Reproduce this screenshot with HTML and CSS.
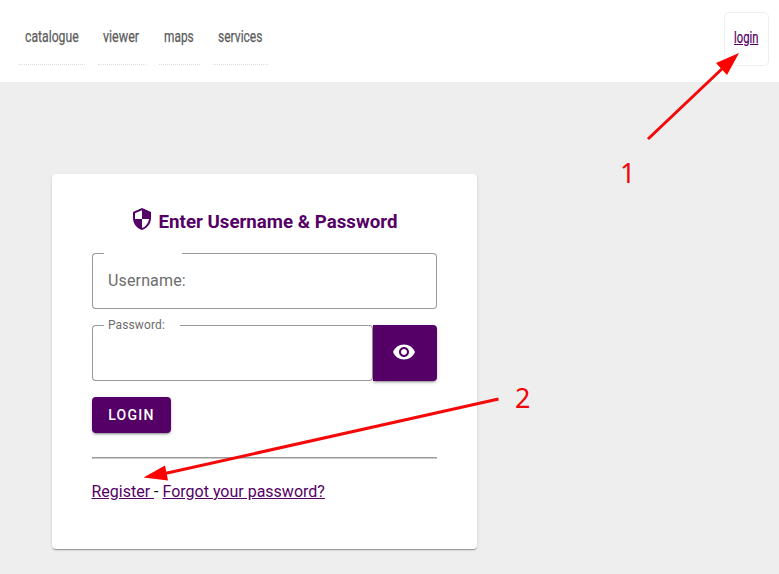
FILE: index.html
```html
<!DOCTYPE html>
<html lang="en">
<head>
<meta charset="utf-8">
<title>Login</title>
<link rel="stylesheet" href="styles.css">
</head>
<body>
<header class="topbar">
  <nav class="menu">
    <a class="menu-item catalogue"><span>catalogue</span></a>
    <a class="menu-item viewer"><span>viewer</span></a>
    <a class="menu-item maps"><span>maps</span></a>
    <a class="menu-item services"><span>services</span></a>
  </nav>
  <a class="login-link" href="#"><span>login</span></a>
</header>
<main>
  <form class="card">
    <h3 class="title">
      <svg class="shield" viewBox="0 0 24 24"><path d="M12 1 3 5v6c0 5.55 3.84 10.74 9 12 5.16-1.26 9-6.45 9-12V5l-9-4zm0 10.99h7c-.53 4.12-3.28 7.79-7 8.94V12H5V6.3l7-3.11v8.8z"/></svg>
      <span>Enter Username &amp; Password</span>
    </h3>
    <label class="field">
      <span class="edge lead"></span>
      <span class="notch wide"><span class="label">Username:</span></span>
      <span class="edge trail"></span>
    </label>
    <div class="row">
      <label class="field">
        <span class="edge lead"></span>
        <span class="notch"><span class="label floating">Password:</span></span>
        <span class="edge trail"></span>
      </label>
      <button class="eye" type="button" aria-label="Show password">
        <svg viewBox="0 0 24 24"><path d="M12 4.5C7 4.5 2.730 7.610 1 12c1.730 4.390 6 7.500 11 7.500s9.270-3.110 11-7.500c-1.730-4.390-6-7.500-11-7.500zM12 17c-2.760 0-5-2.240-5-5s2.240-5 5-5 5 2.240 5 5-2.240 5-5 5zm0-8c-1.660 0-3 1.340-3 3s1.340 3 3 3 3-1.340 3-3-1.340-3-3-3z"/></svg>
      </button>
    </div>
    <button class="submit" type="button">LOGIN</button>
    <hr>
    <p class="links"><a href="#">Register&nbsp;</a>- <a href="#">Forgot your password?</a></p>
  </form>
</main>
<svg class="notes" viewBox="0 0 779 574">
  <path class="line" d="M648 139 725 66M498.500 399 165 473.500"/>
  <path class="head" d="M739 53 727 75 716 63zM143.500 477.500 165 465.500 168 480.500z"/>
  <text x="620" y="183">1</text>
  <text x="515" y="408">2</text>
</svg>
</body>
</html>
```
FILE: styles.css
```css
* { box-sizing: border-box; }
body {
  margin: 0;
  height: 574px;
  overflow: hidden;
  position: relative;
  background: #eee;
  font-family: Roboto, sans-serif;
  font-size: 16px;
}
a { color: #506; }
.topbar {
  height: 82px;
  padding: 12px 10px 0 19px;
  background: #fff;
  display: flex;
  justify-content: space-between;
}
.menu { display: flex; gap: 13px; }
.menu-item {
  height: 53px;
  padding: 15px 0 0 6px;
  border-bottom: 1px dotted #ddd;
  color: #5c5c5c;
}
.menu-item span, .login-link span {
  display: inline-block;
  font-size: 16.5px;
  line-height: 20px;
  transform-origin: 0 0;
  -webkit-text-stroke: .25px currentColor;
}
.catalogue { width: 66px; }
.viewer { width: 48px; padding-left: 5px; }
.maps { width: 41px; padding-left: 5px; }
.services { width: 55px; padding-left: 5px; }
.catalogue span { transform: scaleX(.74); }
.viewer span { transform: scaleX(.76); }
.maps span { transform: scaleX(.72); }
.services span { transform: scaleX(.73); }
.login-link {
  width: 45px;
  height: 54px;
  padding: 15px 0 0 9px;
  border: 1px solid #eee;
  border-radius: 5px;
}
.login-link span { transform: scaleX(.68); text-decoration: underline; }
main { padding: 92px 52px 0; }
.card {
  width: 425px;
  height: 375px;
  padding: 32px 40px;
  border-radius: 4px;
  background: #fff;
  box-shadow: 0 2px 1px -1px rgba(0,0,0,.2), 0 1px 1px rgba(0,0,0,.14), 0 1px 3px rgba(0,0,0,.12);
}
.title {
  margin: 0 0 17px;
  padding-right: 2px;
  height: 30px;
  display: flex;
  justify-content: center;
  gap: 5px;
  color: #506;
  font-size: 18.72px;
  line-height: 32px;
}
.shield { width: 24px; height: 24px; margin-top: 1px; fill: #506; }
.field {
  display: flex;
  flex: 1;
  height: 56px;
  color: #6c6c6c;
}
.edge, .notch { border: 1px solid #999; }
.lead { width: 12px; border-right: 0; border-radius: 4px 0 0 4px; }
.trail { flex: 1; border-left: 0; border-radius: 0 4px 4px 0; }
.notch { width: 76px; padding-left: 4px; border-width: 0 0 1px; }
.wide { width: 78px; }
.label { display: block; line-height: 56px; letter-spacing: .15px; }
.floating { font-size: 12px; line-height: 14px; margin-top: -7px; letter-spacing: .11px; }
.row { display: flex; margin: 16px 0; }
button {
  border: 0;
  background: #506;
  color: #fff;
  font-family: inherit;
  box-shadow: 0 3px 1px -2px rgba(0,0,0,.2), 0 2px 2px rgba(0,0,0,.14), 0 1px 5px rgba(0,0,0,.12);
}
.eye { width: 64px; height: 56px; padding: 0 2px 0 0; border-radius: 0 4px 4px 0; }
.eye svg { display: block; width: 24px; height: 24px; margin: -2px auto 0; fill: #fff; }
.submit {
  display: block;
  width: 79px;
  height: 36px;
  padding: 0;
  border-radius: 4px;
  font-size: 14px;
  font-weight: 500;
  letter-spacing: 1.3px;
}
hr { margin: 24px 0 23px; height: 2px; border: 1px solid; border-color: #999 #bbb #ccc #999; }
.links { margin: 0 0 0 -.5px; line-height: 19px; }
.notes { position: absolute; inset: 0; width: 779px; height: 574px; pointer-events: none; }
.line { fill: none; stroke: #f40808; stroke-width: 3; }
.head { fill: #f00; }
.notes text { fill: #f00808; font-family: "Noto Sans", sans-serif; font-size: 27px; }
```
